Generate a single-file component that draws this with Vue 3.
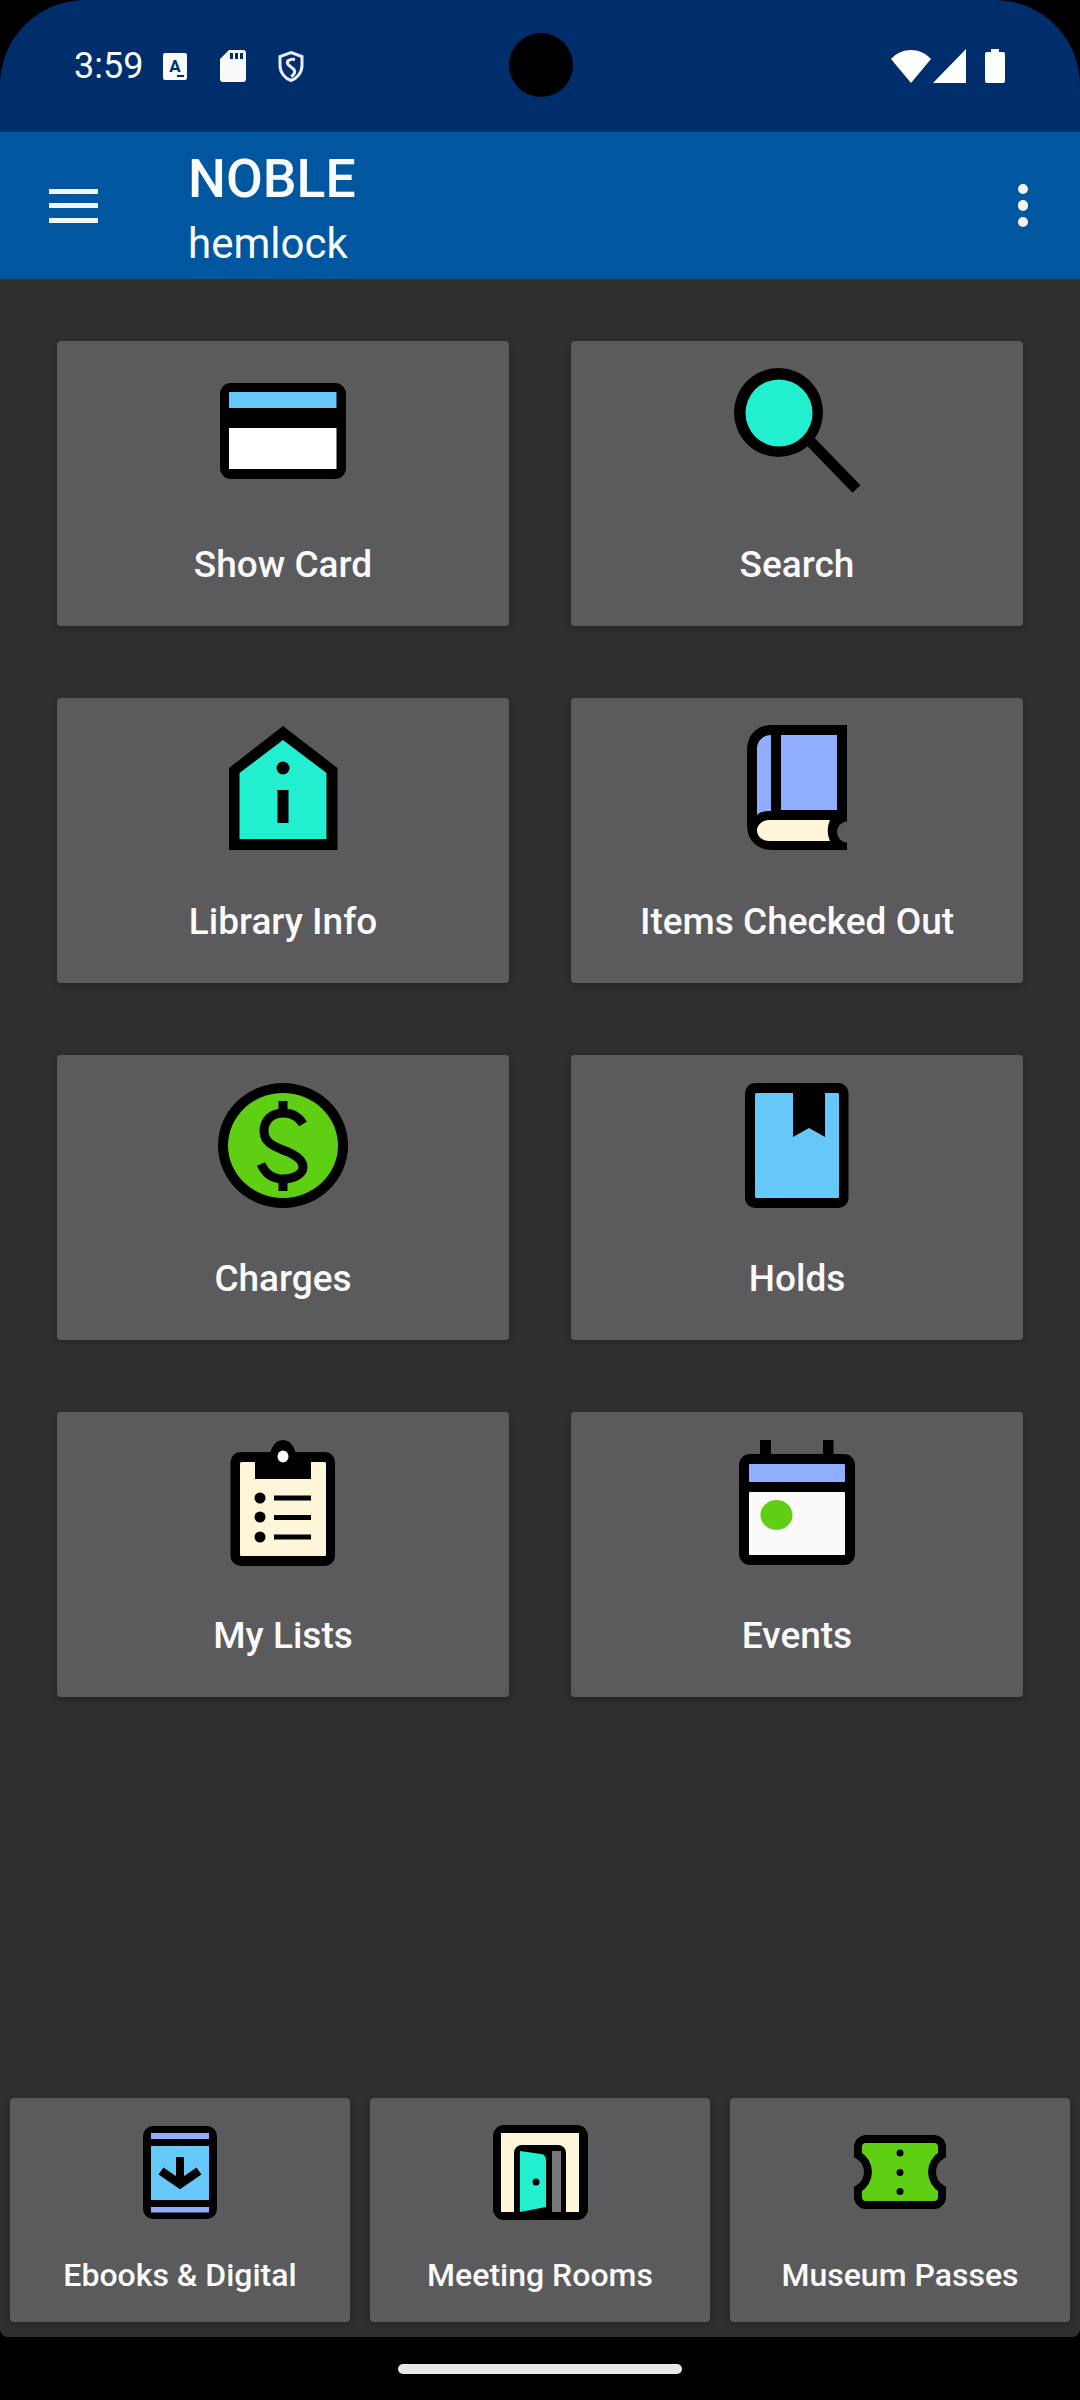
<template>
  <div class="phone">
    <header class="status">
      <div class="status-left">
        <span class="time">3:59</span>
        <span class="note-a">A<i></i></span>
        <svg class="sd" viewBox="0 0 26 32">
          <path d="M9 0H23a3 3 0 0 1 3 3V29a3 3 0 0 1-3 3H3a3 3 0 0 1-3-3V9Z" fill="#fafafa" />
          <path d="M10 3h3v6h-3zM15 3h3v6h-3zM20 3h3v6h-3z" fill="#002d6b" />
        </svg>
        <svg class="shield" viewBox="0 0 26 32">
          <path d="M13 2 24 6V15C24 22 19 28 13 30 7 28 2 22 2 15V6Z" fill="none" stroke="#e8ecf2" stroke-width="3" />
          <path d="M17 9C11 8 8 11 10 14L16 19C18 22 15 25 13 26" fill="none" stroke="#e8ecf2" stroke-width="3" />
        </svg>
      </div>
      <div class="camera"></div>
      <div class="status-right">
        <svg class="wifi" viewBox="0 0 40 34"><path d="M0 10C11-2 29-2 40 10L20 34Z" fill="#fff" /></svg>
        <svg class="signal" viewBox="0 0 33 34"><path d="M0 34 33 0V34Z" fill="#fff" /></svg>
        <svg class="battery" viewBox="0 0 20 34"><path d="M6 0h8v3h4a2 2 0 0 1 2 2V32a2 2 0 0 1-2 2H2a2 2 0 0 1-2-2V5a2 2 0 0 1 2-2h4Z" fill="#fff" /></svg>
      </div>
    </header>

    <div class="toolbar">
      <div class="burger"><span></span><span></span><span></span></div>
      <div class="titles">
        <div class="title">NOBLE</div>
        <div class="subtitle">hemlock</div>
      </div>
      <div class="more"><span></span><span></span><span></span></div>
    </div>

    <main class="content">
      <section class="grid">
        <div class="card">
          <svg class="icon" viewBox="203 361 160 140">
            <rect x="220" y="383" width="126" height="96" rx="11" fill="#000" />
            <rect x="229" y="392" width="107.5" height="16" fill="#66c8f9" />
            <rect x="229" y="428" width="107.5" height="41" fill="#fff" />
          </svg>
          <div class="label">Show Card</div>
        </div>
        <div class="card">
          <svg class="icon" viewBox="717 361 160 140">
            <path d="M810 441 856.5 489" stroke="#000" stroke-width="11" />
            <circle cx="778.5" cy="412.5" r="44.5" fill="#000" />
            <circle cx="779" cy="413" r="33.5" fill="#22efcf" />
          </svg>
          <div class="label">Search</div>
        </div>

        <div class="card">
          <svg class="icon" viewBox="203 718 160 140">
            <path d="M283 726 337.5 768V850H229V768Z" fill="#000" />
            <path d="M283 740 326.5 773V839H239.5V773Z" fill="#22efcf" />
            <circle cx="283" cy="768" r="6.5" fill="#000" />
            <rect x="277.5" y="790" width="11" height="33" fill="#000" />
          </svg>
          <div class="label">Library Info</div>
        </div>
        <div class="card">
          <svg class="icon" viewBox="717 718 160 140">
            <path d="M772 725H847V850H772C757 850 747 840 747 825V750C747 735 757 725 772 725Z" fill="#000" />
            <rect x="781" y="735" width="56" height="75" fill="#90aeff" />
            <path d="M771 735V811C765 811 760 812 757 815V749C757 741 763 735 771 735Z" fill="#90aeff" />
            <path d="M769 820H830C827 827 827 834 830 841H769C762 841 757 836 757 830.5 757 825 762 820 769 820Z" fill="#fff5d8" />
            <circle cx="847.5" cy="832" r="10.5" fill="#5b5b5d" />
          </svg>
          <div class="label">Items Checked Out</div>
        </div>

        <div class="card">
          <svg class="icon" viewBox="203 1074 160 140">
            <ellipse cx="283" cy="1144.5" rx="65" ry="62.5" fill="#000" />
            <ellipse cx="283" cy="1144.5" rx="55" ry="52.5" fill="#5fcf14" />
            <path d="M283 1100V1112M283 1178V1190" stroke="#000" stroke-width="9" />
            <path d="M303 1123C299 1116 292 1112 283 1112 271 1112 264 1120 264 1130 264 1141 273 1145 283 1149 294 1153 303 1158 303 1166 303 1173 294 1178 283 1178 272 1178 265 1172 261 1163" fill="none" stroke="#000" stroke-width="9" />
          </svg>
          <div class="label">Charges</div>
        </div>
        <div class="card">
          <svg class="icon" viewBox="717 1074 160 140">
            <rect x="745" y="1082" width="103.5" height="125" rx="10" fill="#000" />
            <rect x="755" y="1092" width="84" height="105" rx="1.5" fill="#66c8f9" />
            <path d="M793 1090H825V1136L809 1127 793 1136Z" fill="#000" />
          </svg>
          <div class="label">Holds</div>
        </div>

        <div class="card">
          <svg class="icon" viewBox="203 1431 160 140">
            <rect x="230.5" y="1451" width="104.5" height="114" rx="10" fill="#000" />
            <rect x="240" y="1461" width="86" height="94" rx="1.5" fill="#fff5d8" />
            <path d="M255 1461H269.5C269 1448 275 1439 283 1439 291 1439 297 1448 296.5 1461H311V1478H255Z" fill="#000" />
            <ellipse cx="283" cy="1455.5" rx="5.5" ry="6" fill="#fafafa" />
            <circle cx="260" cy="1497" r="5.5" fill="#000" />
            <circle cx="260" cy="1516" r="5.5" fill="#000" />
            <circle cx="260" cy="1536" r="5.5" fill="#000" />
            <path d="M274 1497H311M274 1516.5H311M274 1536H311" stroke="#000" stroke-width="5" />
          </svg>
          <div class="label">My Lists</div>
        </div>
        <div class="card">
          <svg class="icon" viewBox="717 1431 160 140">
            <rect x="760" y="1439" width="11" height="20" fill="#000" />
            <rect x="823" y="1439" width="10.5" height="20" fill="#000" />
            <rect x="739" y="1453" width="116" height="111" rx="11" fill="#000" />
            <rect x="749" y="1463" width="96" height="18" rx="1" fill="#90aeff" />
            <rect x="749" y="1491" width="96" height="63" rx="1" fill="#fafafa" />
            <ellipse cx="776.5" cy="1514" rx="16" ry="15" fill="#5fcf14" />
          </svg>
          <div class="label">Events</div>
        </div>
      </section>

      <section class="bottom">
        <div class="card small">
          <svg class="icon" viewBox="120 2118 120 108">
            <rect x="143" y="2126" width="74" height="93" rx="10" fill="#000" />
            <rect x="151" y="2133" width="58" height="6" fill="#90aeff" />
            <rect x="151" y="2146" width="58" height="54" fill="#66c8f9" />
            <rect x="151" y="2207" width="58" height="5.5" fill="#90aeff" />
            <path d="M180 2157V2185" stroke="#000" stroke-width="8" />
            <path d="M161 2171 180 2184 199 2171" fill="none" stroke="#000" stroke-width="8.5" />
          </svg>
          <div class="label">Ebooks &amp; Digital</div>
        </div>
        <div class="card small">
          <svg class="icon" viewBox="480 2118 120 108">
            <rect x="493" y="2125" width="95" height="95" rx="11" fill="#000" />
            <rect x="501" y="2133" width="78" height="79" fill="#fff5d8" />
            <path d="M514 2212V2153A8 8 0 0 1 522 2145H558A8 8 0 0 1 566 2153V2212Z" fill="#000" />
            <rect x="552" y="2151" width="9" height="61" fill="#777779" />
            <path d="M520 2151 541 2154C544 2154 546 2157 546 2160V2207L520 2212Z" fill="#22efcf" />
            <circle cx="536" cy="2182" r="3.5" fill="#000" />
          </svg>
          <div class="label">Meeting Rooms</div>
        </div>
        <div class="card small">
          <svg class="icon" viewBox="840 2118 120 108">
            <path d="M866 2139H934A8 8 0 0 1 942 2147V2155A19.5 19.5 0 0 0 942 2189V2197A8 8 0 0 1 934 2205H866A8 8 0 0 1 858 2197V2189A19.5 19.5 0 0 0 858 2155V2147A8 8 0 0 1 866 2139Z" fill="#5fcf14" stroke="#000" stroke-width="8" />
            <circle cx="900" cy="2153" r="3.5" fill="#000" />
            <circle cx="900" cy="2172.5" r="3.5" fill="#000" />
            <circle cx="900" cy="2191.5" r="3.5" fill="#000" />
          </svg>
          <div class="label">Museum Passes</div>
        </div>
      </section>
    </main>

    <footer class="nav"><div class="pill"></div></footer>
  </div>
</template>

<script setup>
</script>

<style>
html, body {
  margin: 0;
  background: #000;
}
</style>

<style scoped>
.phone {
  width: 1080px;
  height: 2400px;
  display: flex;
  flex-direction: column;
  background: #000;
  font-family: Roboto, "Liberation Sans", sans-serif;
  overflow: hidden;
}
.status {
  height: 132px;
  flex: none;
  background: #002d6b;
  border-radius: 85px 85px 0 0;
  position: relative;
  display: flex;
  justify-content: space-between;
  align-items: flex-start;
  padding: 0 75px 0 74px;
  box-sizing: border-box;
  color: #fafafa;
}
.status-left {
  display: flex;
  align-items: center;
  height: 132px;
}
.time {
  font-size: 36px;
  line-height: 40px;
  width: 89px;
}
.note-a {
  width: 24px;
  height: 27px;
  background: #fafafa;
  border-radius: 2px;
  color: #002d6b;
  font-size: 17px;
  font-weight: 700;
  line-height: 26px;
  text-align: center;
  position: relative;
  margin-right: 33px;
}
.note-a i {
  position: absolute;
  right: 3px;
  bottom: 3px;
  width: 7px;
  height: 2px;
  background: #002d6b;
}
.sd {
  width: 26px;
  height: 32px;
  margin-right: 32px;
}
.shield {
  width: 26px;
  height: 33px;
}
.camera {
  position: absolute;
  left: 508.5px;
  top: 33px;
  width: 64px;
  height: 64px;
  border-radius: 50%;
  background: #000;
}
.status-right {
  display: flex;
  align-items: flex-end;
  padding-top: 49px;
}
.wifi {
  width: 40px;
  height: 34px;
}
.signal {
  width: 33px;
  height: 34px;
  margin-left: 2px;
}
.battery {
  width: 20px;
  height: 34px;
  margin-left: 19px;
}
.toolbar {
  height: 147px;
  flex: none;
  background: #00579f;
  display: flex;
  align-items: center;
  color: #fafafa;
  padding: 0 52px 0 49px;
  box-sizing: border-box;
}
.burger {
  width: 49px;
  display: flex;
  flex-direction: column;
  gap: 9.5px;
}
.burger span {
  height: 5px;
  background: #f4f4f4;
}
.titles {
  flex: 1;
  margin-left: 90px;
  padding-top: 5px;
}
.title {
  font-size: 53.5px;
  font-weight: 500;
  line-height: 62px;
}
.subtitle {
  font-size: 42px;
  line-height: 50px;
  margin-top: 9px;
}
.more {
  display: flex;
  flex-direction: column;
  gap: 6px;
}
.more span {
  width: 10.5px;
  height: 10.5px;
  border-radius: 50%;
  background: #f4f4f4;
}
.content {
  flex: none;
  height: 2058px;
  background: #2f2f2f;
  border-radius: 0 0 8px 8px;
  display: flex;
  flex-direction: column;
  justify-content: space-between;
}
.grid {
  display: grid;
  grid-template-columns: 452px 452px;
  column-gap: 62px;
  row-gap: 72px;
  padding: 62px 57px 0;
}
.bottom {
  display: grid;
  grid-template-columns: repeat(3, 340px);
  column-gap: 20px;
  padding: 0 10px 15px;
}
.card {
  height: 285px;
  background: #5b5b5d;
  border-radius: 4px;
  box-shadow: 0 3px 6px rgba(0, 0, 0, 0.22);
  display: flex;
  flex-direction: column;
  align-items: center;
  padding-top: 20px;
  box-sizing: border-box;
}
.icon {
  width: 160px;
  height: 140px;
  flex: none;
}
.label {
  margin-top: 42px;
  font-size: 37px;
  font-weight: 500;
  line-height: 44px;
  color: #fafafa;
  white-space: nowrap;
}
.small {
  height: 224px;
}
.small .icon {
  width: 120px;
  height: 108px;
}
.small .label {
  margin-top: 29px;
  font-size: 32px;
  line-height: 40px;
}
.nav {
  flex: 1;
  display: flex;
  justify-content: center;
  padding-top: 27px;
}
.pill {
  width: 284px;
  height: 10px;
  border-radius: 5px;
  background: #e8e8e8;
}
</style>
